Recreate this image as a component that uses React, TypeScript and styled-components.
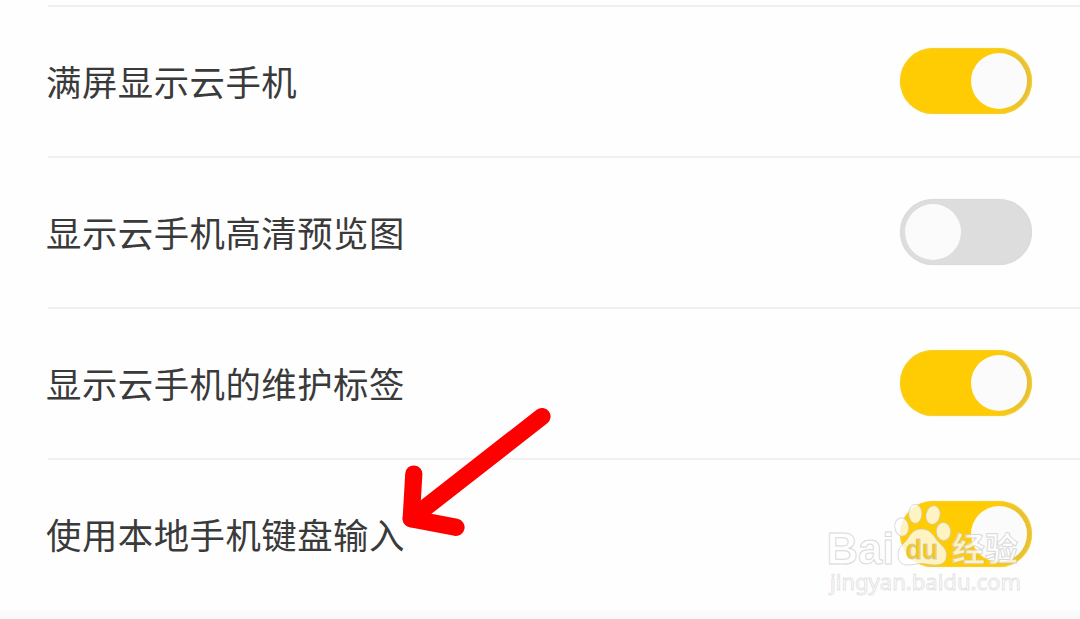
import React from 'react';
import styled, { createGlobalStyle } from 'styled-components';

const GlobalStyle = createGlobalStyle`
  * { box-sizing: border-box; }
  body { margin: 0; background: #fefefe; }
`;

const Screen = styled.main`
  position: relative;
  width: 1080px;
  height: 619px;
  overflow: hidden;
  padding-top: 5px;
  display: flex;
  flex-direction: column;
  background: #fefefe;
  font-family: 'Noto Sans CJK SC', sans-serif;
`;

const Row = styled.div`
  height: 151px;
  flex: none;
  margin-left: 48px;
  padding: 0 48px 0 0;
  border-top: 2px solid #f0f0f0;
  display: flex;
  align-items: center;
  justify-content: space-between;
`;

const Label = styled.span`
  margin-left: -2px;
  padding-bottom: 2px;
  font-size: 35.4px;
  letter-spacing: 0.5px;
  line-height: 54px;
  color: #3a3a3a;
  white-space: nowrap;
`;

const Switch = styled.button<{ $on: boolean }>`
  width: 132px;
  height: 66px;
  margin: 0 0 1px;
  padding: 5px;
  border: 0;
  border-radius: 33px;
  display: flex;
  align-items: center;
  justify-content: ${(p) => (p.$on ? 'flex-end' : 'flex-start')};
  background: ${(p) =>
    p.$on ? 'linear-gradient(90deg, #ffcc04 72%, #e8c234 92%)' : '#dddddd'};
  box-shadow: inset 0 0 0 1px ${(p) => (p.$on ? '#f5cd35' : '#dadada')},
    0 0 2px ${(p) => (p.$on ? '#fff0a0' : '#f4f4f4')};
`;

const Knob = styled.span`
  width: 56px;
  height: 56px;
  border-radius: 50%;
  background: #fcfbfc;
`;

const Footer = styled.div`
  height: 9px;
  flex: none;
  margin-top: 1px;
  background: linear-gradient(#fdfdfd, #f9f9f9 3px);
`;

const Overlay = styled.svg`
  position: absolute;
  left: 0;
  top: 0;
  pointer-events: none;
`;

const settings = [
  { label: '满屏显示云手机', on: true },
  { label: '显示云手机高清预览图', on: false },
  { label: '显示云手机的维护标签', on: true },
  { label: '使用本地手机键盘输入', on: true },
];

const Arrow = () => (
  <g fill="none" stroke="#fe0000" strokeWidth="17.2" strokeLinecap="round" strokeLinejoin="round">
    <path d="M542 416.5 L411.2 518.7" />
    <path d="M413.8 474 L411.2 518.7 L456 527.3" />
  </g>
);

const Watermark = () => (
  <g
    fill="#fff"
    fillOpacity="0.76"
    stroke="#c4c4c4"
    strokeOpacity="0.65"
    strokeWidth="1"
    strokeLinejoin="round"
  >
    <text x="826.5" y="564" fontFamily="Liberation Sans, sans-serif" fontWeight="700" fontSize="45" textLength="68" lengthAdjust="spacingAndGlyphs">Bai</text>
    <ellipse cx="901.8" cy="527" rx="7" ry="9.2" transform="rotate(-8 901.8 527)" />
    <ellipse cx="915.3" cy="513.8" rx="6.6" ry="9.5" />
    <ellipse cx="933" cy="515" rx="7" ry="9.4" transform="rotate(12 933 515)" />
    <ellipse cx="943.5" cy="531.5" rx="7.2" ry="9" transform="rotate(-5 943.5 531.5)" />
    <path d="M921.5 529 C929 529 933 534 936 539 C939 544 946.5 547 946.5 555 C946.5 562 942 565 935 565 C930 565 926 563.5 921.5 563.5 C917 563.5 913 565 908 565 C901 565 898 561 898 554.5 C898 547 904 544 907.5 539 C911 533.5 914 529 921.5 529 Z" />
    <text x="905.5" y="559" fill="#fac914" fillOpacity="1" fontFamily="Liberation Sans, sans-serif" fontWeight="700" fontSize="27" textLength="32.5" lengthAdjust="spacingAndGlyphs">du</text>
    <text x="952" y="561" fontFamily="Noto Sans CJK SC, sans-serif" fontWeight="700" fontSize="33.5" textLength="66" lengthAdjust="spacingAndGlyphs">经验</text>
    <text x="830" y="589.5" strokeOpacity="0.5" strokeWidth="0.9" fontFamily="Noto Sans, sans-serif" fontWeight="400" fontSize="22.5" textLength="191" lengthAdjust="spacingAndGlyphs">jingyan.baidu.com</text>
  </g>
);

export default function App() {
  return (
    <>
      <GlobalStyle />
      <Screen>
        {settings.map((s) => (
          <Row key={s.label}>
            <Label>{s.label}</Label>
            <Switch $on={s.on} role="switch" aria-checked={s.on} aria-label={s.label}>
              <Knob />
            </Switch>
          </Row>
        ))}
        <Footer />
        <Overlay width="1080" height="619" viewBox="0 0 1080 619">
          <Arrow />
          <Watermark />
        </Overlay>
      </Screen>
    </>
  );
}
